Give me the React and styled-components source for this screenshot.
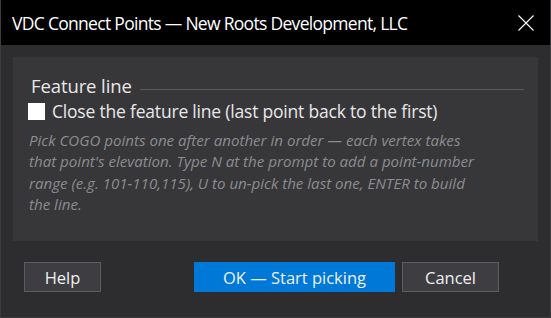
import React from "react";
import styled, { createGlobalStyle } from "styled-components";

const GlobalStyle = createGlobalStyle`
  html, body { margin: 0; padding: 0; background: #2d2d30; }
  * { box-sizing: border-box; }
`;

const Window = styled.div`
  width: 551px;
  height: 318px;
  display: flex;
  flex-direction: column;
  background: #2d2d30;
  border-left: 1px solid #3c3c3f;
  border-right: 1px solid #3c3c3f;
  border-bottom: 1px solid #3c3c3f;
  font-family: "Open Sans", "Noto Sans", sans-serif;
  color: #f0f0f0;
`;

const TitleBar = styled.div`
  height: 45px;
  flex: none;
  background: #000;
  display: flex;
  align-items: center;
  justify-content: space-between;
  padding: 0 16px 0 11px;
`;

const Title = styled.div`
  font-size: 17.5px;
  letter-spacing: -0.7px;
  color: #ffffff;
  white-space: nowrap;
`;

const CloseButton = styled.button`
  width: 17px;
  height: 17px;
  padding: 0;
  border: 0;
  background: transparent;
  display: flex;
  align-items: center;
  justify-content: center;
  cursor: pointer;
`;

const Body = styled.div`
  flex: 1;
  display: flex;
  flex-direction: column;
  padding: 12px 12px 0 12px;
`;

const Panel = styled.div`
  height: 184px;
  background: #37373a;
  padding: 16px 14px 0 15px;
  display: flex;
  flex-direction: column;
`;

const Header = styled.div`
  display: flex;
  align-items: center;
  gap: 8px;
  padding-left: 3px;
`;

const HeaderText = styled.div`
  font-size: 18.5px;
  letter-spacing: -0.1px;
  color: #e8e8e8;
  white-space: nowrap;
  line-height: 26px;
`;

const Rule = styled.div`
  flex: 1;
  height: 1px;
  background: #58585c;
  margin-top: 6px;
`;

const CheckRow = styled.label`
  display: flex;
  align-items: center;
  gap: 7px;
  margin-top: 0px;
  font-size: 17.5px;
  letter-spacing: -0.2px;
  color: #e8e8e8;
  line-height: 24px;
  white-space: nowrap;
`;

const Box = styled.span`
  width: 17px;
  height: 17px;
  background: #ffffff;
  flex: none;
`;

const Description = styled.p`
  margin: 7px 0 0 1px;
  font-size: 15.1px;
  font-style: italic;
  line-height: 21.3px;
  color: #8c8c8f;
  white-space: nowrap;
`;

const Footer = styled.div`
  display: flex;
  align-items: center;
  padding: 21px 39px 0 11px;
  gap: 7px;
`;

const Button = styled.button`
  height: 30px;
  width: ${(p) => p.$w}px;
  margin-right: ${(p) => p.$mr || 0}px;
  background: ${(p) => (p.$primary ? "#0078d7" : "#3e3e42")};
  border: 1px solid ${(p) => (p.$primary ? "#0078d7" : "#5c5c60")};
  color: #f0f0f0;
  font-family: "Open Sans", "Noto Sans", sans-serif;
  font-size: 16.5px;
  padding: 0;
  cursor: pointer;
`;

export default function App() {
  return (
    <>
      <GlobalStyle />
      <Window>
        <TitleBar>
          <Title>VDC Connect Points — New Roots Development, LLC</Title>
          <CloseButton aria-label="Close">
            <svg width="16" height="16" viewBox="0 0 16 16">
              <path d="M0.5 0.5 L15.5 15.5 M15.5 0.5 L0.5 15.5" stroke="#ffffff" strokeWidth="1.1" fill="none" />
            </svg>
          </CloseButton>
        </TitleBar>
        <Body>
          <Panel>
            <Header>
              <HeaderText>Feature line</HeaderText>
              <Rule />
            </Header>
            <CheckRow>
              <Box />
              Close the feature line (last point back to the first)
            </CheckRow>
            <Description>
              Pick COGO points one after another in order — each vertex takes
              <br />
              that point's elevation. Type N at the prompt to add a point-number
              <br />
              range (e.g. 101-110,115), U to un-pick the last one, ENTER to build
              <br />
              the line.
            </Description>
          </Panel>
          <Footer>
            <Button $w={77} $mr={86}>Help</Button>
            <Button $w={201} $primary>OK — Start picking</Button>
            <Button $w={97}>Cancel</Button>
          </Footer>
        </Body>
      </Window>
    </>
  );
}
